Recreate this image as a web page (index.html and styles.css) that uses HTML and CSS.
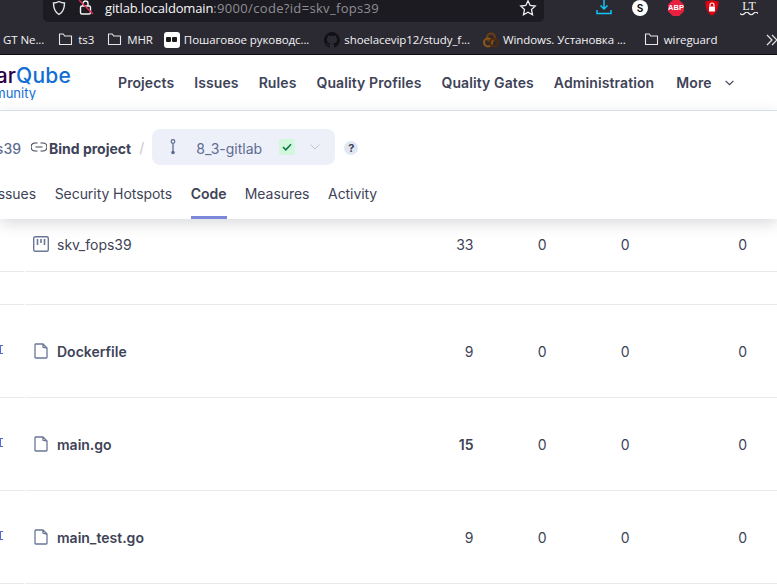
FILE: index.html
```html
<!DOCTYPE html>
<html lang="en">
<head>
  <meta charset="UTF-8">
  <title>skv_fops39 - Code</title>
  <link rel="stylesheet" href="styles.css">
</head>
<body>

  <header class="browser">
    <div class="toolbar">
      <div class="urlbar">
        <svg class="url-icon shield" width="16" height="16" viewBox="0 0 16 16"><path d="M8 1.500c1.800 1 3.500 1.500 5.500 1.500 0 5-1 9-5.500 11.500C3.500 12 2.500 8 2.500 3c2 0 3.700-.5 5.500-1.500z" fill="none" stroke="#e8e8ea" stroke-width="1.400"/></svg>
        <svg class="url-icon lock" width="16" height="16" viewBox="0 0 16 16"><rect x="2.500" y="6" width="10" height="8" rx="1.500" fill="none" stroke="#f4f4f5" stroke-width="1.400"/><path d="M5 6V3.500a2.500 2.500 0 0 1 5 0V6" fill="none" stroke="#f4f4f5" stroke-width="1.400"/><path d="M1 0l14 14" stroke="#e22850" stroke-width="1.400"/></svg>
        <span class="url-text"><b>gitlab.localdomain</b>:9000/code?id=skv_fops39</span>
        <svg class="star" width="18" height="18" viewBox="0 0 18 18"><path d="M9 1.800l2.200 4.700 5 .6-3.700 3.500 1 5.100L9 13.200l-4.500 2.500 1-5.100L1.800 7.100l5-.6z" fill="none" stroke="#f0f0f2" stroke-width="1.300"/></svg>
      </div>
      <div class="extensions">
        <svg width="16" height="16" viewBox="0 0 16 16"><path d="M8 0v9M4.500 5.500L8 9l3.500-3.500M1 10v3.500h14V10" fill="none" stroke="#12c5f5" stroke-width="1.500"/></svg>
        <span class="ext-s">S</span>
        <span class="ext-abp">ABP</span>
        <svg width="16" height="16" viewBox="0 0 16 16"><path d="M8 0c2 1 4 1.300 6.500 1.300 0 6.500-1.500 11.700-6.500 14.200C3 13 1.500 7.800 1.500 1.300 4 1.300 6 1 8 0z" fill="#e4000f"/><rect x="5" y="6.500" width="6" height="5" rx=".6" fill="#fff"/><path d="M6 6.500V5a2 2 0 0 1 4 0v1.500" fill="none" stroke="#fff" stroke-width="1.200"/></svg>
        <span class="ext-lt">LT<svg width="18" height="4" viewBox="0 0 18 4"><path d="M0 1.500q2.200 2.500 4.500 0t4.500 0 4.500 0 4.500 0" fill="none" stroke="#f4f4f5" stroke-width="1.200"/></svg></span>
      </div>
    </div>

    <nav class="bookmarks">
      <span class="bm bm-first">GT Ne...</span>
      <span class="bm"><svg class="folder" width="15" height="13" viewBox="0 0 15 13"><path d="M1.500 1h3.800l1.400 2h6.800v8.500h-12z" fill="none" stroke="#e6e6e8" stroke-width="1.100" stroke-linejoin="round"/></svg>ts3</span>
      <span class="bm bm-mhr"><svg class="folder" width="15" height="13" viewBox="0 0 15 13"><path d="M1.500 1h3.800l1.400 2h6.800v8.500h-12z" fill="none" stroke="#e6e6e8" stroke-width="1.100" stroke-linejoin="round"/></svg>MHR</span>
      <span class="bm"><span class="fav-cb"><i></i><i></i></span>Пошаговое руководс...</span>
      <span class="bm bm-github"><svg width="16" height="16" viewBox="0 0 16 16"><path fill="#111014" d="M8 0a8 8 0 0 0-2.500 15.600c.4.100.5-.2.500-.4v-1.400c-2.200.5-2.700-1-2.700-1-.4-.9-.9-1.200-.9-1.200-.7-.5.100-.5.100-.5.800.1 1.200.8 1.200.8.700 1.200 1.900.9 2.300.7.100-.5.300-.9.500-1.100-1.800-.2-3.600-.9-3.600-4 0-.9.300-1.600.8-2.100-.1-.2-.4-1 .1-2.100 0 0 .7-.2 2.200.8a7.600 7.600 0 0 1 4 0c1.500-1 2.200-.8 2.200-.8.400 1.100.2 1.900.1 2.100.5.600.8 1.300.8 2.100 0 3.100-1.900 3.700-3.700 3.900.3.300.6.800.6 1.500v2.200c0 .2.100.5.600.4A8 8 0 0 0 8 0z"/></svg>shoelacevip12/study_f...</span>
      <span class="bm"><svg width="16" height="16" viewBox="0 0 16 16"><circle cx="8" cy="5.500" r="4" fill="none" stroke="#6e3d12" stroke-width="2.200"/><circle cx="5" cy="10.500" r="4" fill="none" stroke="#8a5416" stroke-width="2.200"/><circle cx="11" cy="10.500" r="4" fill="none" stroke="#4f2b0c" stroke-width="2.200"/></svg>Windows. Установка ...</span>
      <span class="bm bm-last"><svg class="folder" width="15" height="13" viewBox="0 0 15 13"><path d="M1.500 1h3.800l1.400 2h6.800v8.500h-12z" fill="none" stroke="#e6e6e8" stroke-width="1.100" stroke-linejoin="round"/></svg>wireguard</span>
      <svg class="more-bm" width="11" height="12" viewBox="0 0 11 12"><path d="M1 1l5 5-5 5M6 1l5 5-5 5" fill="none" stroke="#e6e6e8" stroke-width="1.200"/></svg>
    </nav>
  </header>

  <div class="topnav">
    <div class="logo">
      <div class="logo-name"><span>Sonar<em>Qube</em></span></div>
      <div class="logo-edition"><span>Community</span></div>
    </div>
    <ul class="menu">
      <li>Projects</li>
      <li>Issues</li>
      <li>Rules</li>
      <li>Quality Profiles</li>
      <li>Quality Gates</li>
      <li>Administration</li>
      <li class="menu-more">More<svg width="9" height="6" viewBox="0 0 9 6"><path d="M.6.800L4.500 4.700 8.400.800" fill="none" stroke="#3e4357" stroke-width="1.200"/></svg></li>
    </ul>
  </div>

  <div class="subnav">
    <div class="crumbs">
      <div class="project-name"><span>skv_fops39</span></div>
      <svg class="link-icon" width="16" height="10" viewBox="0 0 16 10"><path d="M6.500 1H4a4 4 0 0 0 0 8h2.500M9.500 1H12a4 4 0 0 1 0 8H9.500M4.500 5h7" fill="none" stroke="#3e4357" stroke-width="1.200"/></svg>
      <strong class="bind">Bind project</strong>
      <span class="slash">/</span>
      <div class="branch">
        <svg class="branch-icon" width="8" height="16" viewBox="0 0 8 16"><circle cx="4" cy="2.500" r="1.800" fill="none" stroke="#5d6c92" stroke-width="1.200"/><circle cx="4" cy="13.500" r="1.800" fill="#5d6c92"/><path d="M4 4.500v7.500" stroke="#5d6c92" stroke-width="1.300"/></svg>
        <span class="branch-name">8_3-gitlab</span>
        <span class="status"><svg width="10" height="8" viewBox="0 0 10 8"><path d="M1 4l2.800 2.800L9 1.200" fill="none" stroke="#0c7a45" stroke-width="1.600"/></svg></span>
        <svg class="branch-caret" width="10" height="6" viewBox="0 0 10 6"><path d="M.5.500L5 5 9.500.500" fill="none" stroke="#bcc2d3" stroke-width="1"/></svg>
      </div>
      <span class="help">?</span>
    </div>
    <ul class="tabs">
      <li class="tab-clipped"><span>Issues</span></li>
      <li>Security Hotspots</li>
      <li class="active">Code</li>
      <li>Measures</li>
      <li>Activity</li>
    </ul>
  </div>

  <main class="listing">
    <div class="row row-root">
      <div class="row-mark"></div>
      <div class="row-body">
        <div class="name">
          <svg width="16" height="16" viewBox="0 0 16 16"><rect x=".7" y=".7" width="14.600" height="14.600" rx="1.500" fill="none" stroke="#6a7799" stroke-width="1.400"/><path d="M4.500 3v6M8 3v4M11.500 3v6" stroke="#6a7799" stroke-width="1.600"/></svg>
          skv_fops39
        </div>
        <div class="num">33</div><div class="num">0</div><div class="num">0</div><div class="num">0</div>
      </div>
    </div>
    <div class="row row-spacer">
      <div class="row-mark"></div>
      <div class="row-body"></div>
    </div>

    <div class="row row-file">
      <div class="row-mark"><i></i></div>
      <div class="row-body">
        <div class="name strong">
          <svg width="16" height="16" viewBox="0 0 16 16"><path d="M2 1h8l4 4v9.300a.7.7 0 0 1-.7.7H2.700a.7.7 0 0 1-.7-.7V1.700A.7.7 0 0 1 2.700 1z M10 1v3.300l4 .7" fill="none" stroke="#6a7799" stroke-width="1.300"/></svg>
          Dockerfile
        </div>
        <div class="num">9</div><div class="num">0</div><div class="num">0</div><div class="num">0</div>
      </div>
    </div>
    <div class="row row-file">
      <div class="row-mark"><i></i></div>
      <div class="row-body">
        <div class="name strong">
          <svg width="16" height="16" viewBox="0 0 16 16"><path d="M2 1h8l4 4v9.300a.7.7 0 0 1-.7.7H2.700a.7.7 0 0 1-.7-.7V1.700A.7.7 0 0 1 2.700 1z M10 1v3.300l4 .7" fill="none" stroke="#6a7799" stroke-width="1.300"/></svg>
          main.go
        </div>
        <div class="num strong">15</div><div class="num">0</div><div class="num">0</div><div class="num">0</div>
      </div>
    </div>
    <div class="row row-file">
      <div class="row-mark"><i></i></div>
      <div class="row-body">
        <div class="name strong">
          <svg width="16" height="16" viewBox="0 0 16 16"><path d="M2 1h8l4 4v9.300a.7.7 0 0 1-.7.7H2.700a.7.7 0 0 1-.7-.7V1.700A.7.7 0 0 1 2.700 1z M10 1v3.300l4 .7" fill="none" stroke="#6a7799" stroke-width="1.300"/></svg>
          main_test.go
        </div>
        <div class="num">9</div><div class="num">0</div><div class="num">0</div><div class="num">0</div>
      </div>
    </div>
  </main>

</body>
</html>
```

FILE: styles.css
```css
* {
  box-sizing: border-box;
}
html, body {
  margin: 0;
  height: 585px;
  overflow: hidden;
  background: #fff;
}
body {
  font-family: Inter, sans-serif;
  font-size: 14px;
  color: #3e4357;
}
ul {
  list-style: none;
  margin: 0;
  padding: 0;
}

/* browser chrome */
.browser {
  height: 55px;
  background: #2b2a33;
  border-bottom: 1px solid #0c0c0f;
  color: #f2f2f4;
  font-family: "Open Sans", sans-serif;
}
.toolbar {
  display: flex;
  height: 25px;
}
.urlbar {
  display: flex;
  align-items: center;
  width: 501px;
  height: 22px;
  margin-left: 43px;
  padding: 0 7px 6px 8px;
  background: #1c1b22;
  border-radius: 0 0 5px 5px;
}
.url-icon {
  flex: none;
}
.lock {
  margin-left: 11px;
}
.url-text {
  margin-left: 11px;
  font-size: 13px;
  letter-spacing: 0.33px;
  color: #8f8f94;
  white-space: nowrap;
}
.url-text b {
  font-weight: 400;
  letter-spacing: -0.15px;
  color: #f6f6f7;
}
.star {
  margin-left: auto;
}
.extensions {
  display: flex;
  align-items: center;
  gap: 20px;
  height: 16px;
  margin-left: 52px;
}
.ext-s {
  width: 16px;
  height: 16px;
  border-radius: 50%;
  background: #fff;
  color: #15141a;
  font: 700 10px/16px Inter, sans-serif;
  text-align: center;
}
.ext-abp {
  width: 16px;
  height: 16px;
  background: #e8203f;
  clip-path: polygon(30% 0, 70% 0, 100% 30%, 100% 70%, 70% 100%, 30% 100%, 0 70%, 0 30%);
  color: #fff;
  font: 700 7.500px/16px "Liberation Sans", sans-serif;
  text-align: center;
}
.ext-lt {
  display: flex;
  flex-direction: column;
  align-items: center;
  width: 18px;
  font: 400 12px/11px "Liberation Serif", serif;
}
.bookmarks {
  display: flex;
  align-items: center;
  gap: 13px;
  height: 29px;
  padding-left: 3px;
  font-size: 11.500px;
  letter-spacing: -0.08px;
  white-space: nowrap;
}
.bm {
  display: flex;
  align-items: center;
  gap: 4px;
}
.bm-first {
  margin-right: 1px;
}
.bm-mhr {
  margin-right: -2px;
}
.bm-github {
  margin-left: 2px;
}
.bm-last {
  margin-left: 5px;
}
.folder {
  margin-right: 1px;
}
.fav-cb {
  display: flex;
  align-items: center;
  justify-content: center;
  gap: 1px;
  width: 16px;
  height: 16px;
  background: #fff;
  border-radius: 3px;
}
.fav-cb i {
  width: 5px;
  height: 5px;
  background: #1a1a1a;
  border-radius: 1px;
}
.more-bm {
  margin-left: auto;
}

/* top nav */
.topnav {
  display: flex;
  align-items: center;
  height: 56px;
  border-bottom: 1px solid #e1e6f3;
}
.logo {
  flex: none;
  display: flex;
  flex-direction: column;
  width: 72px;
  margin-right: 46px;
}
.logo-name, .logo-edition {
  display: flex;
  justify-content: flex-end;
  overflow: hidden;
  white-space: nowrap;
  color: #126ed3;
}
.logo-name {
  width: 71px;
  font-size: 21px;
  font-weight: 500;
  letter-spacing: 0.2px;
  line-height: 21px;
}
.logo-name span {
  color: #290042;
}
.logo-name em {
  font-style: normal;
  color: #126ed3;
}
.logo-edition {
  width: 36px;
  font-size: 13px;
  line-height: 14px;
}
.menu {
  display: flex;
  gap: 20px;
  font-weight: 600;
  letter-spacing: 0.1px;
  white-space: nowrap;
}
.menu li {
  display: flex;
  align-items: center;
}
.menu svg {
  margin-left: 13px;
}
.menu .menu-more {
  margin-left: 2px;
}

/* project header */
.subnav {
  position: relative;
  z-index: 1;
  height: 108px;
  padding-top: 18px;
  background: #fff;
  box-shadow: 0 4px 14px rgba(40, 44, 60, 0.18);
}
.crumbs {
  display: flex;
  align-items: center;
  height: 36px;
}
.project-name {
  flex: none;
  display: flex;
  justify-content: flex-end;
  width: 21px;
  margin-top: 2px;
  overflow: hidden;
  font-weight: 500;
  color: #5d6c92;
}
.link-icon {
  margin-left: 10px;
}
.bind {
  margin: 2px 0 0 2px;
  font-weight: 700;
}
.slash {
  margin: 0 8px;
  color: #c8c8cc;
}
.branch {
  display: flex;
  align-items: center;
  width: 183px;
  height: 36px;
  padding-left: 17px;
  background: #eef0f9;
  border-radius: 8px;
}
.branch-name {
  margin: 2px 0 0 19px;
  color: #5d6c92;
}
.status {
  display: flex;
  align-items: center;
  justify-content: center;
  width: 16px;
  height: 16px;
  margin-left: 17px;
  background: #d1f7dc;
  border-radius: 2px;
}
.branch-caret {
  margin-left: 15px;
}
.help {
  width: 14px;
  height: 14px;
  margin: 2px 0 0 9px;
  border-radius: 50%;
  background: #e1e6f3;
  font-size: 11px;
  font-weight: 700;
  line-height: 14px;
  text-align: center;
}
.tabs {
  display: flex;
  gap: 18.700px;
  margin-top: 17px;
  letter-spacing: -0.06px;
}
.tabs li {
  height: 37px;
  padding-top: 3px;
  white-space: nowrap;
}
.tabs .tab-clipped {
  display: flex;
  justify-content: flex-end;
  width: 36px;
  overflow: hidden;
}
.tabs .active {
  width: 36px;
  margin-right: -0.700px;
  font-weight: 600;
  border-bottom: 3px solid #7b87d9;
}

/* component table */
.row {
  display: flex;
}
.row-root {
  height: 53px;
}
.row-spacer {
  height: 33px;
}
.row-file {
  height: 93px;
}
.row-mark {
  position: relative;
  flex: none;
  width: 24px;
  border-bottom: 1px solid #eaeaec;
}
.row-mark i {
  position: absolute;
  left: 0;
  top: 40px;
  width: 3px;
  height: 9px;
  border: 1px solid #5469d4;
  border-right: none;
}
.row-body {
  flex: 1;
  display: grid;
  grid-template-columns: 1fr 60px 73px 83px 117.500px;
  align-items: center;
  margin-left: 1px;
  padding: 0 30px 0 0;
  border-bottom: 1px solid #eaeaec;
}
.row-root .row-body {
  padding-bottom: 2px;
}
.name {
  display: flex;
  align-items: center;
  gap: 8px;
  padding-left: 8px;
}
.name svg {
  flex: none;
}
.num {
  text-align: right;
}
.strong {
  font-weight: 600;
}
```
